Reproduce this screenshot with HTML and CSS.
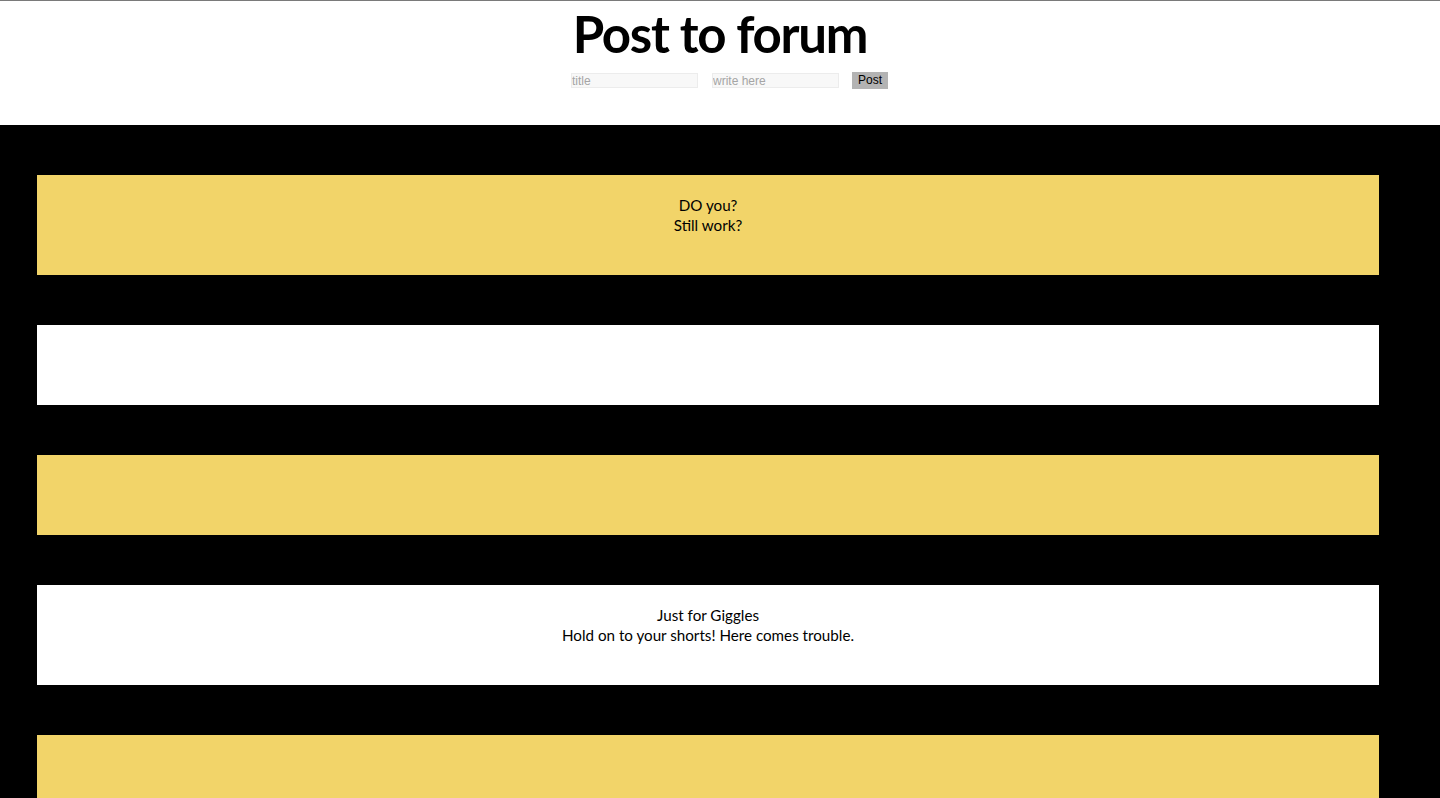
FILE: index.html
```html
<!DOCTYPE html>
<html>
<head>
<meta charset="utf-8">
<link rel="stylesheet" href="styles.css">
</head>
<body>
<header class="top">
  <h1 class="title">Post to forum</h1>
  <form class="post-form">
    <input class="field" type="text" placeholder="title">
    <input class="field" type="text" placeholder="write here">
    <button class="btn" type="button">Post</button>
  </form>
</header>
<main class="board">
  <div class="card yellow"><div class="lines"><div>DO you?</div><div>Still work?</div></div></div>
  <div class="card white"><div class="lines"></div></div>
  <div class="card yellow"><div class="lines"></div></div>
  <div class="card white"><div class="lines"><div>Just for Giggles</div><div>Hold on to your shorts! Here comes trouble.</div></div></div>
  <div class="card yellow"><div class="lines"></div></div>
</main>
</body>
</html>
```
FILE: styles.css
```css
html, body {
  margin: 0;
  padding: 0;
  background: #000;
  height: 798px;
  overflow: hidden;
}
.top {
  background: #fff;
  border-top: 1px solid #7a7a7a;
  height: 124px;
  display: flex;
  flex-direction: column;
  align-items: center;
}
.title {
  margin: 2px 0 0 0;
  font-family: "Lato", sans-serif;
  font-weight: 700;
  font-size: 51px;
  line-height: 62px;
  letter-spacing: -1.3px;
  color: #000;
}
.post-form {
  margin-top: 7px;
  display: flex;
  align-items: center;
  gap: 14px;
  padding-left: 19px;
}
.field {
  width: 127px;
  height: 15px;
  box-sizing: border-box;
  border: 1px solid #ececec;
  background: #f8f8f8;
  padding: 0;
  font-family: "Liberation Sans", Arial, sans-serif;
  font-size: 12px;
  color: #333;
  outline: none;
}
.field::placeholder {
  color: #a5a5a5;
}
.btn {
  width: 36px;
  height: 17px;
  border: none;
  background: #b3b3b3;
  padding: 0;
  font-family: "Liberation Sans", Arial, sans-serif;
  font-size: 12px;
  line-height: 17px;
  color: #000;
  margin-left: -1px;
}
.board {
  background: #000;
  padding: 50px 61px 0 37px;
  display: flex;
  flex-direction: column;
  gap: 50px;
}
.card {
  padding: 20px 0 40px;
  text-align: center;
  font-family: "Lato", sans-serif;
  font-size: 15.2px;
  line-height: 20px;
  color: #000;
}
.lines {
  min-height: 20px;
}
.yellow { background: #f2d469; }
.white { background: #fff; }
```
